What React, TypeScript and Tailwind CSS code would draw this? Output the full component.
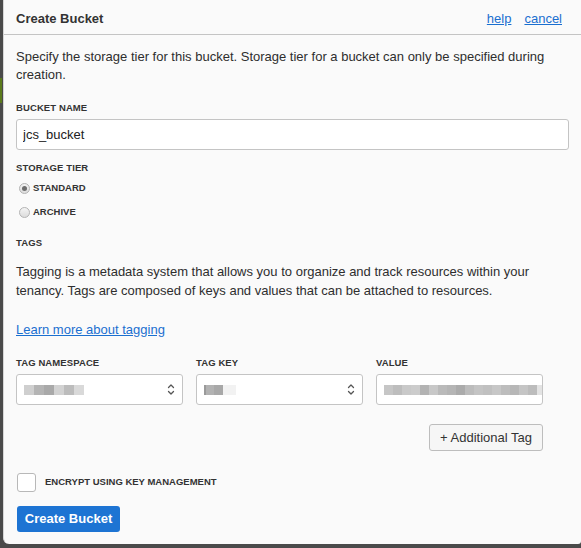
import { useState } from 'react';

const labelCls = 'block text-[9.5px] leading-[12px] font-bold text-[#333] tracking-[0.1px]';

function Chevrons() {
  return (
    <svg width="8" height="13" viewBox="0 0 8 13" fill="none" stroke="#555" strokeWidth="1.3" strokeLinecap="round" strokeLinejoin="round">
      <path d="M1.5 4.5 L4 2 L6.5 4.5" />
      <path d="M1.5 8.5 L4 11 L6.5 8.5" />
    </svg>
  );
}

// pixelated (redacted) text blocks
function Mosaic({ shades, w = 8 }: { shades: string[]; w?: number }) {
  return (
    <div className="flex h-[10px] shrink-0">
      {shades.map((c, i) => (
        <div key={i} className="h-full shrink-0" style={{ width: w, background: c }} />
      ))}
    </div>
  );
}

function Select({ children }: { children: React.ReactNode }) {
  return (
    <div className="h-[31px] flex items-center justify-between pl-[7px] pr-[7px] bg-white border border-[#c4c4c4] rounded-[3px]">
      {children}
      <Chevrons />
    </div>
  );
}

export default function App() {
  const [tier, setTier] = useState<'standard' | 'archive'>('standard');
  const [encrypt, setEncrypt] = useState(false);

  const radio = (value: 'standard' | 'archive', label: string) => (
    <label className="flex items-center h-[14px] pl-[3px] cursor-pointer" onClick={() => setTier(value)}>
      <span className="w-[11px] h-[11px] rounded-full border border-[#b3b3b3] bg-gradient-to-b from-[#f4f4f4] to-[#dcdcdc] flex items-center justify-center">
        {tier === value && <span className="w-[5px] h-[5px] rounded-full bg-[#6e6e6e]" />}
      </span>
      <span className="ml-[3px] text-[9.5px] font-bold text-[#333]">{label}</span>
    </label>
  );

  return (
    <div className="w-[581px] h-[548px] bg-[#4a4a4a] flex font-['Liberation_Sans',Arial,sans-serif] overflow-hidden">
      {/* background peeking on the left */}
      <div className="w-[3px] flex flex-col">
        <div className="h-[78px]" />
        <div className="h-[25px] w-[2px] bg-[#5b7a1c]" />
      </div>

      <div className="flex-1 h-[544px] bg-[#fafafa] rounded-bl-[6px] rounded-br-[3px] border-l border-[#d6d6d6] flex flex-col">
        {/* header */}
        <div className="h-[35px] pt-[4px] border-b border-[#c4c4c4] flex items-center justify-between pl-[12px] pr-[19px]">
          <h1 className="text-[13px] font-bold text-[#333]">Create Bucket</h1>
          <div className="flex gap-[13px] text-[13px] text-[#1a6fd0]">
            <a href="#" className="underline">help</a>
            <a href="#" className="underline">cancel</a>
          </div>
        </div>

        <div className="pl-[12px] pr-[12px] pt-[13px] text-[#2e2e2e]">
          <p className="text-[13px] leading-[18px]">
            Specify the storage tier for this bucket. Storage tier for a bucket can only be specified during creation.
          </p>

          <label className={`${labelCls} mt-[18px]`}>BUCKET NAME</label>
          <input
            defaultValue="jcs_bucket"
            className="mt-[5px] w-full h-[31px] px-[6px] text-[13px] text-[#222] bg-white border border-[#c4c4c4] rounded-[3px] outline-none"
          />

          <label className={`${labelCls} mt-[12px]`}>STORAGE TIER</label>
          <div className="mt-[7px]">{radio('standard', 'STANDARD')}</div>
          <div className="mt-[10px]">{radio('archive', 'ARCHIVE')}</div>

          <label className={`${labelCls} mt-[18px]`}>TAGS</label>
          <p className="mt-[13px] text-[13px] leading-[19px]">
            Tagging is a metadata system that allows you to organize and track resources within your tenancy. Tags are composed of keys and values that can be attached to resources.
          </p>

          <a href="#" className="block mt-[20px] text-[13px] leading-[19px] text-[#1a6fd0] underline">Learn more about tagging</a>

          <div className="mt-[18px] w-[527px] grid grid-cols-3 gap-x-[13px]">
            <div>
              <label className={labelCls}>TAG NAMESPACE</label>
              <div className="mt-[5px]">
                <Select>
                  <Mosaic w={10} shades={['#cfcfcf', '#b4b4b4', '#a9a9a9', '#d2d2d2', '#bcbcbc', '#d9d9d9']} />
                </Select>
              </div>
            </div>
            <div>
              <label className={labelCls}>TAG KEY</label>
              <div className="mt-[5px]">
                <Select>
                  <div className="flex h-[10px]">
                    <div className="w-[2px] bg-[#9a9a9a]" />
                    <div className="w-[8px] bg-[#b2b2b2]" />
                    <div className="w-[9px] bg-[#a8a8a8]" />
                    <div className="w-[13px] bg-[#f2f2f2]" />
                  </div>
                </Select>
              </div>
            </div>
            <div>
              <label className={labelCls}>VALUE</label>
              <div className="mt-[5px] h-[31px] flex items-center pl-[7px] bg-white border border-[#c4c4c4] rounded-[3px] overflow-hidden">
                <Mosaic
                  w={9}
                  shades={['#c6c6c6', '#bdbdbd', '#c9c9c9', '#cccccc', '#b3b3b3', '#c8c8c8', '#bababa', '#b5b5b5', '#ababab', '#bcbcbc', '#c4c4c4', '#c0c0c0', '#c7c7c7', '#bdbdbd', '#b7b7b7', '#c5c5c5', '#bcbcbc', '#e3e3e3']}
                />
              </div>
            </div>
          </div>

          <div className="w-[527px] flex justify-end mt-[19px]">
            <button className="h-[27px] w-[114px] text-[13px] text-[#333] bg-[#f6f6f6] border border-[#bdbdbd] rounded-[3px]">
              + Additional Tag
            </button>
          </div>

          <label className="mt-[22px] flex items-center cursor-pointer" onClick={() => setEncrypt(!encrypt)}>
            <span className="w-[19px] h-[19px] ml-[1px] bg-white border border-[#b8b8b8] rounded-[3px] flex items-center justify-center text-[12px] text-[#333]">
              {encrypt ? '✓' : ''}
            </span>
            <span className="ml-[9px] text-[9.5px] font-bold text-[#333]">ENCRYPT USING KEY MANAGEMENT</span>
          </label>

          <button className="mt-[14px] ml-[1px] h-[26px] w-[103px] bg-[#1d74d3] text-white text-[13px] font-bold rounded-[3px]">
            Create Bucket
          </button>
        </div>
      </div>
    </div>
  );
}
